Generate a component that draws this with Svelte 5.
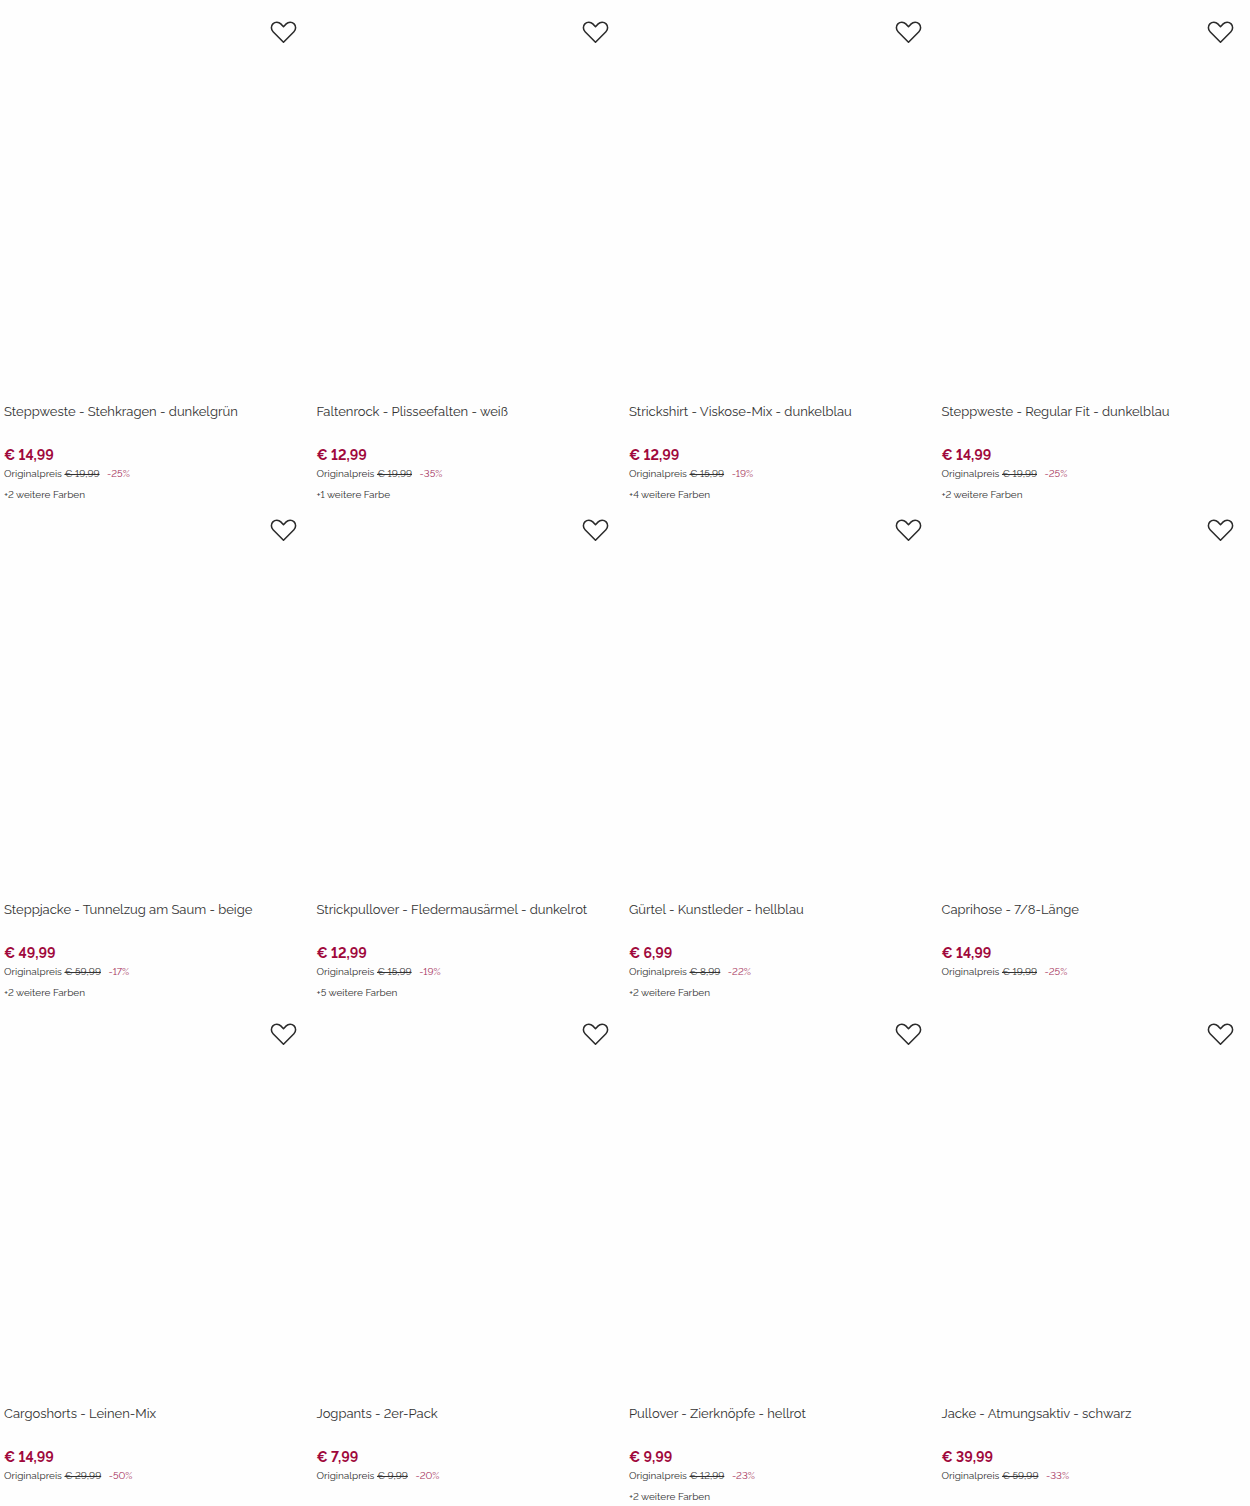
<script>
  let groups = [
    [
      {name: 'Steppweste - Stehkragen - dunkelgrün', price: '14,99', original: '19,99', discount: 25, colors: 2},
      {name: 'Faltenrock - Plisseefalten - weiß', price: '12,99', original: '19,99', discount: 35, colors: 1},
      {name: 'Strickshirt - Viskose-Mix - dunkelblau', price: '12,99', original: '15,99', discount: 19, colors: 4},
      {name: 'Steppweste - Regular Fit - dunkelblau', price: '14,99', original: '19,99', discount: 25, colors: 2},
      {name: 'Steppjacke - Tunnelzug am Saum - beige', price: '49,99', original: '59,99', discount: 17, colors: 2},
      {name: 'Strickpullover - Fledermausärmel - dunkelrot', price: '12,99', original: '15,99', discount: 19, colors: 5},
      {name: 'Gürtel - Kunstleder - hellblau', price: '6,99', original: '8,99', discount: 22, colors: 2},
      {name: 'Caprihose - 7/8-Länge', price: '14,99', original: '19,99', discount: 25, colors: 0}
    ],
    [
      {name: 'Cargoshorts - Leinen-Mix', price: '14,99', original: '29,99', discount: 50, colors: 0},
      {name: 'Jogpants - 2er-Pack', price: '7,99', original: '9,99', discount: 20, colors: 0},
      {name: 'Pullover - Zierknöpfe - hellrot', price: '9,99', original: '12,99', discount: 23, colors: 2},
      {name: 'Jacke - Atmungsaktiv - schwarz', price: '39,99', original: '59,99', discount: 33, colors: 0}
    ]
  ];
</script>

<main>
  {#each groups as products}
    <ul class="products">
      {#each products as product}
        <li class="product">
          <div class="image">
            <button class="wish" type="button" aria-label="{product.name} merken">
              <svg viewBox="0 0 28 24" width="27" height="24" aria-hidden="true">
                <path d="M14 22.6 3.2 11.7C.9 9.4.9 5.8 3 3.6c2.300-2.400 6-2.300 8.200 0L14 6.500l2.800-2.900c2.200-2.300 5.900-2.400 8.200 0 2.100 2.200 2.100 5.800-.2 8.100Z" />
              </svg>
            </button>
          </div>
          <a class="name" href="#produkt">{product.name}</a>
          <div class="price">€ {product.price}</div>
          <div class="original">
            Originalpreis <s>€ {product.original}</s>
            <span class="discount">-{product.discount}%</span>
          </div>
          {#if product.colors}
            <div class="colors">+{product.colors} weitere {product.colors === 1 ? 'Farbe' : 'Farben'}</div>
          {/if}
        </li>
      {/each}
    </ul>
  {/each}
</main>

<style>
  :global(body) {
    margin: 0;
    background: #fefefe;
  }

  main {
    font-family: Raleway, Lato, sans-serif;
    font-variant-numeric: lining-nums;
    color: #333;
  }

  .products {
    display: grid;
    grid-template-columns: repeat(4, minmax(0, 1fr));
    margin: 0;
    padding: 6px 0 0;
    list-style: none;
  }

  .product {
    display: flex;
    flex-direction: column;
    box-sizing: border-box;
    min-height: 498px;
    padding: 0 4px;
  }

  .image {
    display: flex;
    align-items: flex-start;
    justify-content: flex-end;
    box-sizing: border-box;
    height: 394px;
    padding: 14px 12px 0 0;
  }

  .wish {
    display: flex;
    padding: 0;
    border: 0;
    background: none;
    cursor: pointer;
  }

  .wish path {
    fill: #fff;
    stroke: #2b2b2b;
    stroke-width: 1.6;
    stroke-linejoin: round;
  }

  .name {
    min-height: 46px;
    font-size: 13px;
    line-height: 24px;
    color: inherit;
    text-decoration: none;
  }

  .price {
    font-size: 14px;
    font-weight: 700;
    line-height: 19px;
    color: #a0093c;
  }

  .original {
    font-size: 10px;
    line-height: 17px;
  }

  .discount {
    margin-left: 5px;
    color: #a5305a;
  }

  .colors {
    margin-top: 6px;
    font-size: 10px;
    line-height: 14px;
  }
</style>
